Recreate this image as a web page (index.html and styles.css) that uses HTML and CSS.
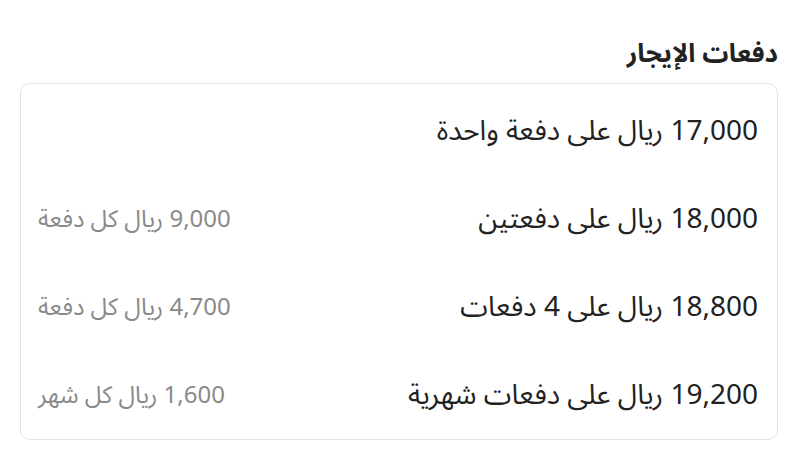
FILE: index.html
```html
<!DOCTYPE html>
<html lang="ar" dir="rtl">
<head>
<meta charset="utf-8">
<link rel="stylesheet" href="styles.css">
</head>
<body>
<div class="page">
  <h2 class="title">دفعات الإيجار</h2>
  <div class="card">
    <div class="row"><span class="main">17,000 ريال على دفعة واحدة</span></div>
    <div class="row"><span class="main">18,000 ريال على دفعتين</span><span class="sub">9,000 ريال كل دفعة</span></div>
    <div class="row"><span class="main">18,800 ريال على 4 دفعات</span><span class="sub">4,700 ريال كل دفعة</span></div>
    <div class="row"><span class="main">19,200 ريال على دفعات شهرية</span><span class="sub">1,600 ريال كل شهر</span></div>
  </div>
</div>
</body>
</html>
```
FILE: styles.css
```css
html, body {
  margin: 0;
  padding: 0;
  background: #ffffff;
}
body {
  font-family: "Noto Sans Arabic", "Noto Sans", "DejaVu Sans", sans-serif;
  color: #222222;
}
.page {
  padding: 36px 22px 0 20px;
}
.title {
  margin: 0 0 11px 0;
  font-size: 26px;
  font-weight: 700;
  line-height: 36px;
  color: #222222;
}
.card {
  border: 1.5px solid #e3e3e3;
  border-radius: 10px;
  height: 357px;
  display: flex;
  flex-direction: column;
  box-sizing: border-box;
  padding: 2px 0 0 0;
}
.row {
  flex: 1;
  display: flex;
  align-items: center;
  justify-content: space-between;
  padding: 2px 19px 0 17px;
}
.main {
  font-size: 28px;
  color: #222222;
}
.sub {
  font-size: 24px;
  color: #8a8a8a;
}
```
